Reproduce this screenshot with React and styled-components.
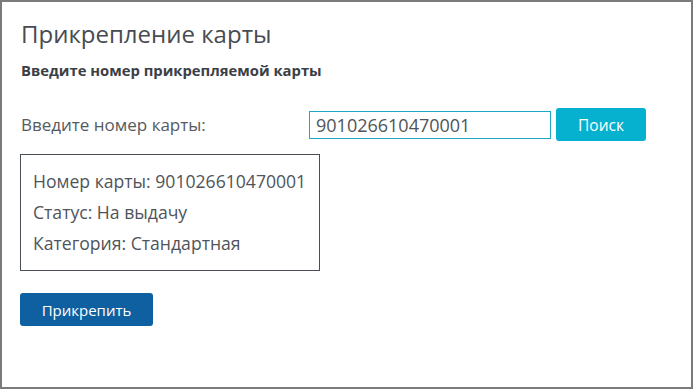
import React from "react";
import styled, { createGlobalStyle } from "styled-components";

const Global = createGlobalStyle`
  html, body { margin: 0; padding: 0; background: #fff; }
  body { font-family: "Open Sans", "Noto Sans", sans-serif; }
`;

const Card = styled.div`
  box-sizing: border-box;
  width: 693px;
  height: 389px;
  border: 2px solid #7b7b7b;
  padding: 14px 18px 0 18px;
  display: flex;
  flex-direction: column;
  align-items: flex-start;
`;

const Title = styled.h1`
  margin: 0 0 0 1px;
  font-size: 24px;
  font-weight: 400;
  line-height: 36px;
  color: #474c52;
`;

const Subtitle = styled.h2`
  margin: 8px 0 0 1px;
  font-size: 14.8px;
  font-weight: 700;
  line-height: 20px;
  color: #3b4046;
`;

const SearchRow = styled.div`
  display: flex;
  align-items: center;
  margin-top: 28px;
`;

const Label = styled.label`
  width: 289px;
  padding-left: 1px;
  box-sizing: border-box;
  font-size: 17px;
  color: #555a60;
`;

const Input = styled.input`
  box-sizing: border-box;
  width: 242px;
  height: 28px;
  border: 1px solid #1ea6c6;
  padding: 0 6px;
  font-family: inherit;
  font-size: 18px;
  color: #4f545a;
  outline: none;
`;

const Button = styled.button`
  box-sizing: border-box;
  height: 33px;
  width: ${(p) => p.$w}px;
  border: none;
  border-radius: 3px;
  background: ${(p) => p.$bg};
  color: #fff;
  font-family: inherit;
  font-size: ${(p) => p.$fs}px;
  cursor: pointer;
`;

const SearchButton = styled(Button)`
  margin-left: 5px;
`;

const InfoBox = styled.div`
  box-sizing: border-box;
  width: 300px;
  height: 117px;
  margin-top: 13px;
  border: 1px solid #4a4f55;
  padding: 14px 4px 0 12px;
  display: flex;
  flex-direction: column;
  gap: 7px;
`;

const InfoLine = styled.div`
  font-size: 17.6px;
  line-height: 24px;
  white-space: nowrap;
  color: #4f545a;
`;

const AttachButton = styled(Button)`
  margin-top: 22px;
`;

export default function App() {
  return (
    <>
      <Global />
      <Card>
        <Title>Прикрепление карты</Title>
        <Subtitle>Введите номер прикрепляемой карты</Subtitle>
        <SearchRow>
          <Label>Введите номер карты:</Label>
          <Input defaultValue="901026610470001" />
          <SearchButton $w={90} $fs={15.5} $bg="#06b0cf">Поиск</SearchButton>
        </SearchRow>
        <InfoBox>
          <InfoLine>Номер карты: 901026610470001</InfoLine>
          <InfoLine>Статус: На выдачу</InfoLine>
          <InfoLine>Категория: Стандартная</InfoLine>
        </InfoBox>
        <AttachButton $w={133} $fs={15} $bg="#0f60a0">Прикрепить</AttachButton>
      </Card>
    </>
  );
}
